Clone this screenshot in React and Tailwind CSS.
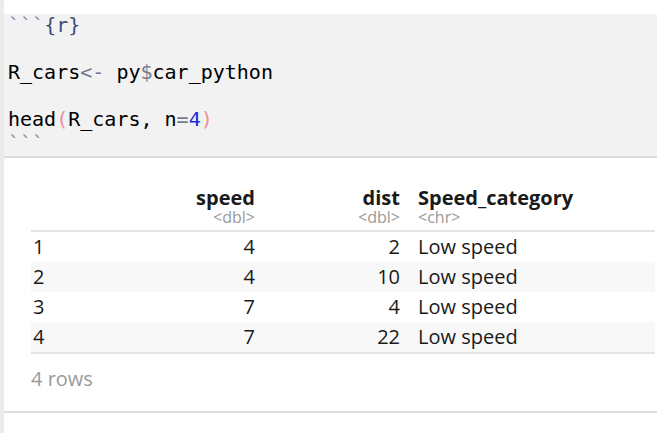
import React from 'react';

const rows = [
    { n: 1, speed: 4, dist: 2, cat: 'Low speed' },
    { n: 2, speed: 4, dist: 10, cat: 'Low speed' },
    { n: 3, speed: 7, dist: 4, cat: 'Low speed' },
    { n: 4, speed: 7, dist: 22, cat: 'Low speed' },
];

const App = () => {
    return (
        <div className="flex min-h-[433px] bg-white">
            <div className="w-[4px] shrink-0 bg-[#ebebeb]" />
            <div className="flex-1">
                <div className="h-[14px]" />
                <pre className="bg-[#f2f2f2] border-b-2 border-[#dcdcdc] pl-[4px] text-[20px] leading-[23.6px] text-black font-['DejaVu_Sans_Mono',monospace]">
                    <div><span className="text-[#7d8cac]">```</span><span className="text-[#3b4d75]">{'{r}'}</span></div>
                    <div>&nbsp;</div>
                    <div>R_cars<span className="text-[#6f7c8c]">&lt;-</span> py<span className="text-[#6f7c8c]">$</span>car_python</div>
                    <div>&nbsp;</div>
                    <div>head<span className="text-[#ea8e9c]">(</span>R_cars, n<span className="text-[#6f7c8c]">=</span><span className="text-[#1f2bd6]">4</span><span className="text-[#ea8e9c]">)</span></div>
                    <div className="text-[#7d8cac]">```</div>
                </pre>

                <div className="pl-[27px] pr-[2px] font-['Open_Sans',sans-serif] text-[#1a1a1a]">
                    <div className="mt-[28px] flex border-b-2 border-[#e4e4e4] pb-[5px]">
                        <div className="w-[122px]" />
                        <div className="w-[102px] text-right">
                            <div className="text-[20px] leading-[23px] font-bold">speed</div>
                            <div className="text-[16px] leading-[16px] text-[#999]">&lt;dbl&gt;</div>
                        </div>
                        <div className="w-[145px] text-right">
                            <div className="text-[20px] leading-[23px] font-bold">dist</div>
                            <div className="text-[16px] leading-[16px] text-[#999]">&lt;dbl&gt;</div>
                        </div>
                        <div className="pl-[18px]">
                            <div className="text-[20px] leading-[23px] font-bold">Speed_category</div>
                            <div className="text-[16px] leading-[16px] text-[#999]">&lt;chr&gt;</div>
                        </div>
                    </div>
                    {rows.map((r) => (
                        <div
                            key={r.n}
                            className={r.n % 2 === 0 ? 'flex h-[30px] items-center bg-[#f8f8f8] text-[20px]' : 'flex h-[30px] items-center text-[20px]'}
                        >
                            <div className="w-[122px] pl-[2px]">{r.n}</div>
                            <div className="w-[102px] text-right">{r.speed}</div>
                            <div className="w-[145px] text-right">{r.dist}</div>
                            <div className="pl-[18px]">{r.cat}</div>
                        </div>
                    ))}
                    <div className="border-t-2 border-[#e4e4e4]" />
                    <div className="mt-[13px] text-[20px] leading-[24px] text-[#9a9a9a]">4 rows</div>
                    <div className="h-[20px]" />
                </div>
                <div className="border-b-2 border-[#dedede]" />
            </div>
        </div>
    );
};

export default App;
